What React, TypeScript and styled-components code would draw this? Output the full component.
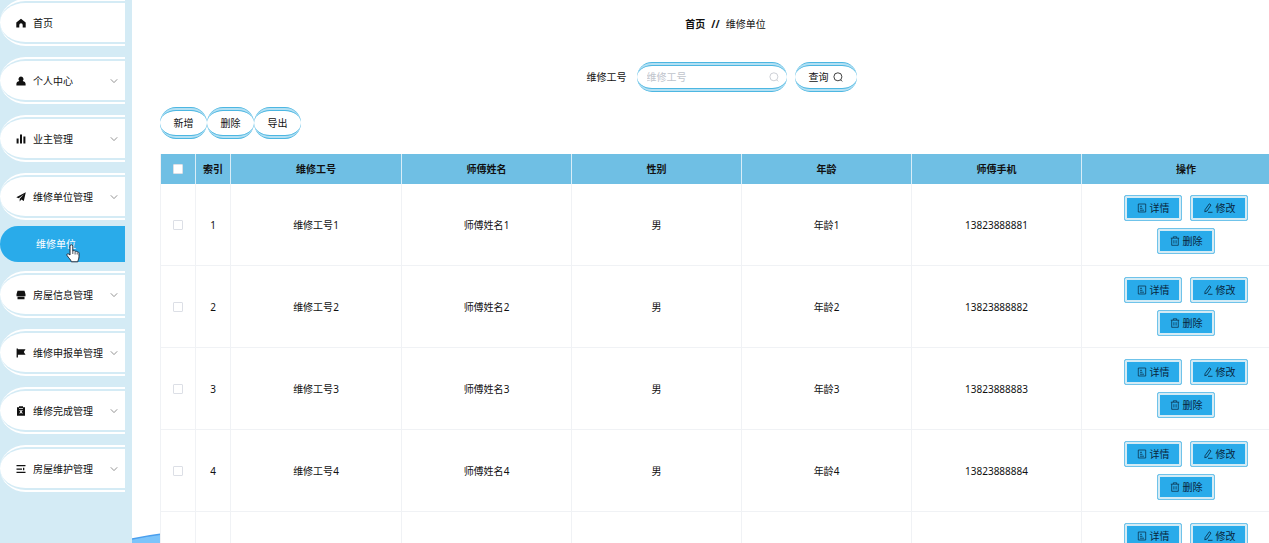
import React from "react";
import styled, { createGlobalStyle, css } from "styled-components";

const Global = createGlobalStyle`
  * { box-sizing: border-box; }
  body {
    margin: 0;
    background: #fff;
    color: #111;
    font: 10px/16px "Noto Sans", "Noto Sans CJK SC", sans-serif;
    overflow: hidden;
  }
  button, input { font: inherit; color: inherit; }
  button { cursor: pointer; }
`;

const Layout = styled.div`
  display: flex;
  height: 100vh;
  overflow: hidden;
`;

const Sidebar = styled.nav`
  position: relative;
  flex: 0 0 132px;
  background: #d4ebf5;
`;

const Menu = styled.ul`
  list-style: none;
  margin: -3px 7px 0 0;
  padding: 0;
  display: flex;
  flex-direction: column;
  gap: 7px;
`;

const MenuButton = styled.button`
  display: flex;
  align-items: center;
  width: 100%;
  height: 51px;
  padding: 0 6px 0 16px;
  background: #fff;
  border: 6px double #d4ebf5;
  border-width: 6px 0;
  border-radius: 26px 0 0 26px;
  text-align: left;
  white-space: nowrap;
`;

const MenuLabel = styled.span`
  flex: 1;
  margin-left: 7px;
`;

const SubLink = styled.a`
  display: flex;
  align-items: center;
  height: 36px;
  margin-top: 4px;
  padding-left: 36px;
  border-radius: 18px 0 0 18px;
  background: #29abea;
  color: #fff;
  text-decoration: none;
`;

const Pointer = styled.svg`
  position: absolute;
  left: 66px;
  top: 244px;
`;

const Main = styled.main`
  position: relative;
  flex: 1;
  min-width: 0;
  padding-left: 28px;
  overflow: hidden;
`;

const Wave = styled.svg`
  position: absolute;
  left: 0;
  bottom: 0;
`;

const Content = styled.div`
  position: relative;
  min-width: 1131px;
`;

const Breadcrumb = styled.div`
  display: flex;
  justify-content: center;
  gap: 6px;
  padding-top: 16px;
`;

const SearchForm = styled.form`
  display: flex;
  justify-content: center;
  align-items: center;
  gap: 8px;
  margin: 30px 8px 0 0;
`;

const SearchLabel = styled.label`
  min-width: 42px;
`;

const striped = css`
  background:
    linear-gradient(#fff, #fff) padding-box,
    linear-gradient(#b4e0f3, #b4e0f3) border-box;
  border: 4px double #4db7e2;
  border-width: 4px 0;
  border-radius: 16px;
`;

const SearchBox = styled.div`
  ${striped}
  display: flex;
  align-items: center;
  width: 150px;
  height: 30px;
  padding: 0 8px 0 10px;
  color: #c0c4cc;
`;

const SearchInput = styled.input`
  flex: 1;
  min-width: 0;
  padding: 0;
  border: 0;
  outline: 0;
  background: none;
  &::placeholder { color: #c0c4cc; opacity: 1; }
`;

const PillButton = styled.button<{ $tall?: boolean }>`
  ${striped}
  display: flex;
  align-items: center;
  justify-content: center;
  gap: 4px;
  height: ${(p) => (p.$tall ? 32 : 30)}px;
  min-width: ${(p) => (p.$tall ? 47 : 62)}px;
  padding: 0 13px;
`;

const Toolbar = styled.div`
  display: flex;
  margin: 15px 0;
`;

const Table = styled.table`
  width: 100%;
  table-layout: fixed;
  border-collapse: separate;
  border-spacing: 0;
  background: #fff;
  border-left: 1px solid #f0f2f5;
  text-align: center;
`;

const Col = styled.col<{ $w?: number }>`
  width: ${(p) => (p.$w ? `${p.$w}px` : "auto")};
`;

const HeadCell = styled.th`
  height: 30px;
  padding: 0;
  background: #6fbfe4;
  border-right: 1px solid #d9edf7;
`;

const Cell = styled.td`
  padding: 11px 0;
  border-right: 1px solid #f0f2f5;
  border-bottom: 1px solid #f0f2f5;
`;

const Check = styled.input.attrs({ type: "checkbox" })`
  appearance: none;
  display: block;
  width: 10px;
  height: 10px;
  margin: 0 auto;
  border: 1px solid #dcdfe6;
  border-radius: 1px;
  background: #fff;
`;

const Actions = styled.div`
  display: flex;
  flex-wrap: wrap;
  justify-content: center;
  gap: 7px 8px;
  padding: 0 36px;
`;

const ActionButton = styled.button`
  display: flex;
  align-items: center;
  justify-content: center;
  gap: 3px;
  width: 58px;
  height: 26px;
  padding: 0;
  background: #29abea;
  border: 1px solid #6fc3ea;
  border-radius: 2px;
  box-shadow: inset 0 0 0 2px #d4ebf5;
  color: #08263c;
  line-height: 12px;
`;

const icons: Record<string, React.ReactNode> = {
  home: <path fill="currentColor" d="M5 .7 9.700 4.500V9.500H6.700V7a1.700 1.700 0 0 0-3.400 0v2.500H.3V4.500z" />,
  user: <path fill="currentColor" d="M5 .5a2.600 2.600 0 0 1 1.700 4.500C8.600 5.400 9.600 6.500 9.600 8v1.500H.4V8c0-1.500 1-2.600 2.900-3A2.600 2.600 0 0 1 5 .5z" />,
  chart: <path fill="currentColor" d="M.6 4.500h2v5h-2zM4 .5h2v9H4zM7.400 2.500h2v7h-2z" />,
  plane: <path fill="currentColor" d="M9.800.3 7.800 9 5.300 7.500 3.700 9.600V6.700L8 2.300 2.700 6.200.3 5.200z" />,
  shop: <path fill="currentColor" d="M1.500.8h7l1 3.400v2H.5v-2zM1.500 6.800h7v2.400h-7z" />,
  flag: <path fill="currentColor" d="M.6.5h1.300v.7h7.600L7.800 4l1.700 2.800H1.900v2.700H.6z" />,
  clip: <path fill="currentColor" fillRule="evenodd" d="M1 1.200h2V.3h4v.9h2v8.500H1zM3 2v.8h4V2zM3.200 4l1.200 1.700-1.200 1.800h1.100L5 6.400l.8 1.100h1.100L5.600 5.700 6.800 4H5.700L5 5 4.300 4z" />,
  list: <path fill="currentColor" d="M.5 1h9v1.300h-9zM.5 4.400h5.500v1.300H.5zM7 3.700h1.300v2.600H7zM.5 7.800h9v1.300h-9z" />,
  down: <path fill="none" stroke="#888" strokeWidth=".9" d="M1.800 3.300 5 6.600l3.200-3.300" />,
  search: <path fill="none" stroke="currentColor" strokeWidth=".8" d="M8.900 4.800a4 4 0 1 1-8 0 4 4 0 0 1 8 0zM7.600 7.800 9.200 9.400" />,
  detail: <path fill="none" stroke="currentColor" strokeWidth=".7" d="M1.300 1h7.400v8H1.300zM3 3.300h2M3 5.300h2.500M3 7.200h4" />,
  edit: <path fill="none" stroke="currentColor" strokeWidth=".8" d="M6.300.8 8 2 4 8l-2.200.8.3-2.200zM5 9.300h4.500" />,
  trash: <path fill="none" stroke="currentColor" strokeWidth=".7" d="M.8 2.200h8.400M3.300 2V.8h3.400V2M1.700 2.300v7h6.600v-7M3.900 4.200v3.300M6.100 4.200v3.300" />,
};

const Icon = ({ name }: { name: string }) => (
  <svg width="10" height="10" viewBox="0 0 10 10" aria-hidden="true">
    {icons[name]}
  </svg>
);

const menu = [
  { icon: "home", label: "首页" },
  { icon: "user", label: "个人中心", more: true },
  { icon: "chart", label: "业主管理", more: true },
  { icon: "plane", label: "维修单位管理", more: true, child: "维修单位" },
  { icon: "shop", label: "房屋信息管理", more: true },
  { icon: "flag", label: "维修申报单管理", more: true },
  { icon: "clip", label: "维修完成管理", more: true },
  { icon: "list", label: "房屋维护管理", more: true },
];

const heads = ["索引", "维修工号", "师傅姓名", "性别", "年龄", "师傅手机", "操作"];
const rows = [1, 2, 3, 4, 5];

export default function App() {
  return (
    <Layout>
      <Global />
      <Sidebar>
        <Menu>
          {menu.map((m) => (
            <li key={m.label}>
              <MenuButton type="button">
                <Icon name={m.icon} />
                <MenuLabel>{m.label}</MenuLabel>
                {m.more && <Icon name="down" />}
              </MenuButton>
              {m.child && <SubLink href="#unit">{m.child}</SubLink>}
            </li>
          ))}
        </Menu>
        <Pointer width="14" height="19" viewBox="0 0 14 19" aria-hidden="true">
          <path
            d="M4 11V2.200a1.400 1.400 0 0 1 2.800 0V7c.9-.7 2-.4 2.300.4.900-.5 1.800-.2 2.100.6 1-.3 1.800.3 1.800 1.300v3.500c0 2-.9 2.800-1.200 5H5.300c-.5-2.300-2.700-3.800-4.300-6.400-.6-1.300.8-2.200 1.800-1.300z"
            fill="#fff"
            stroke="#222b3a"
          />
          <path d="M6.800 7v3M9.100 8v2.500M11.200 8.500v2" stroke="#222b3a" strokeWidth=".8" />
        </Pointer>
      </Sidebar>
      <Main>
        <Wave width="100" height="10" viewBox="0 0 100 10" aria-hidden="true">
          <path d="M0 6Q14 3 30 1H100V10H0z" fill="#7cc4fa" />
          <path d="M0 6Q14 3 30 1" fill="none" stroke="#4a9fee" strokeWidth="1.5" />
        </Wave>
        <Content>
          <Breadcrumb>
            <b>首页</b>
            <b>//</b>
            <span>维修单位</span>
          </Breadcrumb>
          <SearchForm>
            <SearchLabel htmlFor="worker">维修工号</SearchLabel>
            <SearchBox>
              <SearchInput id="worker" placeholder="维修工号" />
              <Icon name="search" />
            </SearchBox>
            <PillButton type="button">
              查询 <Icon name="search" />
            </PillButton>
          </SearchForm>
          <Toolbar>
            <PillButton type="button" $tall>新增</PillButton>
            <PillButton type="button" $tall>删除</PillButton>
            <PillButton type="button" $tall>导出</PillButton>
          </Toolbar>
          <Table>
            <colgroup>
              <Col $w={35} />
              <Col $w={35} />
              <Col $w={171} />
              <Col />
              <Col />
              <Col />
              <Col />
              <Col $w={209} />
            </colgroup>
            <thead>
              <tr>
                <HeadCell><Check aria-label="全选" /></HeadCell>
                {heads.map((h) => <HeadCell key={h}>{h}</HeadCell>)}
              </tr>
            </thead>
            <tbody>
              {rows.map((n) => (
                <tr key={n}>
                  <Cell><Check aria-label={`选择${n}`} /></Cell>
                  <Cell>{n}</Cell>
                  <Cell>维修工号{n}</Cell>
                  <Cell>师傅姓名{n}</Cell>
                  <Cell>男</Cell>
                  <Cell>年龄{n}</Cell>
                  <Cell>1382388888{n}</Cell>
                  <Cell>
                    <Actions>
                      <ActionButton type="button"><Icon name="detail" />详情</ActionButton>
                      <ActionButton type="button"><Icon name="edit" />修改</ActionButton>
                      <ActionButton type="button"><Icon name="trash" />删除</ActionButton>
                    </Actions>
                  </Cell>
                </tr>
              ))}
            </tbody>
          </Table>
        </Content>
      </Main>
    </Layout>
  );
}
